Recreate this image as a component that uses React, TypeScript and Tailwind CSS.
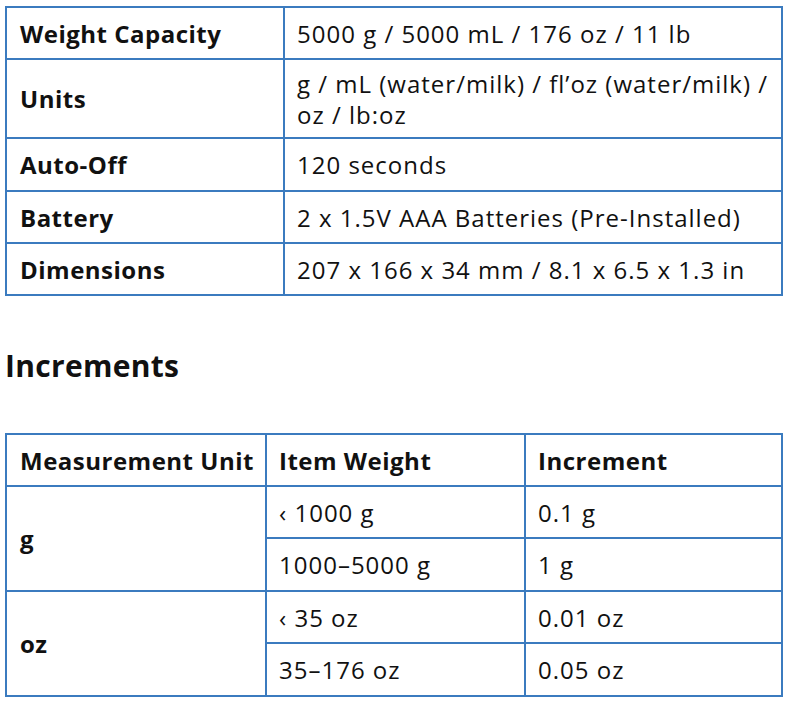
import React from "react";

const B = "border-2 border-[#3b7bbf]";
const R = "tracking-[1px] font-normal";
const K = "tracking-[0.5px] font-bold";

export default function App() {
  const spec: [string, React.ReactNode, string][] = [
    ["Weight Capacity", "5000 g / 5000 mL / 176 oz / 11 lb", "h-[52px]"],
    [
      "Units",
      <>
        g / mL (water/milk) / fl’oz (water/milk) /
        <br />
        oz / lb:oz
      </>,
      "h-[79px]",
    ],
    ["Auto-Off", "120 seconds", "h-[53px]"],
    ["Battery", "2 x 1.5V AAA Batteries (Pre-Installed)", "h-[52px]"],
    ["Dimensions", "207 x 166 x 34 mm / 8.1 x 6.5 x 1.3 in", "h-[52px]"],
  ];
  return (
    <div
      className="w-[790px] h-[701px] bg-white text-[#111] pl-[5px] pt-[6px] overflow-hidden"
      style={{ fontFamily: '"Open Sans", "Liberation Sans", sans-serif' }}
    >
      <table className="w-[778px] table-fixed border-collapse text-[24px] leading-[31px]">
        <colgroup>
          <col className="w-[278px]" />
          <col />
        </colgroup>
        <tbody>
          {spec.map(([k, v, h]) => (
            <tr key={k} className={h}>
              <td className={`${B} ${K} pl-[13px] align-middle`}>{k}</td>
              <td className={`${B} ${R} pl-[12px] pr-0 align-middle whitespace-nowrap`}>{v}</td>
            </tr>
          ))}
        </tbody>
      </table>

      <h2 className="mt-[50px] text-[30px] leading-[40px] font-bold tracking-[0.3px]">Increments</h2>

      <table className="mt-[47px] w-[778px] table-fixed border-collapse text-[24px] leading-[31px]">
        <colgroup>
          <col className="w-[260px]" />
          <col className="w-[259px]" />
          <col />
        </colgroup>
        <tbody>
          <tr className="h-[52px]">
            <td className={`${B} ${K} pl-[13px]`}>Measurement Unit</td>
            <td className={`${B} ${K} pl-[12px]`}>Item Weight</td>
            <td className={`${B} ${K} pl-[12px]`}>Increment</td>
          </tr>
          <tr className="h-[52px]">
            <td rowSpan={2} className={`${B} ${K} pl-[13px]`}>g</td>
            <td className={`${B} ${R} pl-[12px]`}>‹ 1000 g</td>
            <td className={`${B} ${R} pl-[12px]`}>0.1 g</td>
          </tr>
          <tr className="h-[53px]">
            <td className={`${B} ${R} pl-[12px]`}>1000–5000 g</td>
            <td className={`${B} ${R} pl-[12px]`}>1 g</td>
          </tr>
          <tr className="h-[52px]">
            <td rowSpan={2} className={`${B} ${K} pl-[13px]`}>oz</td>
            <td className={`${B} ${R} pl-[12px]`}>‹ 35 oz</td>
            <td className={`${B} ${R} pl-[12px]`}>0.01 oz</td>
          </tr>
          <tr className="h-[53px]">
            <td className={`${B} ${R} pl-[12px]`}>35–176 oz</td>
            <td className={`${B} ${R} pl-[12px]`}>0.05 oz</td>
          </tr>
        </tbody>
      </table>
    </div>
  );
}
